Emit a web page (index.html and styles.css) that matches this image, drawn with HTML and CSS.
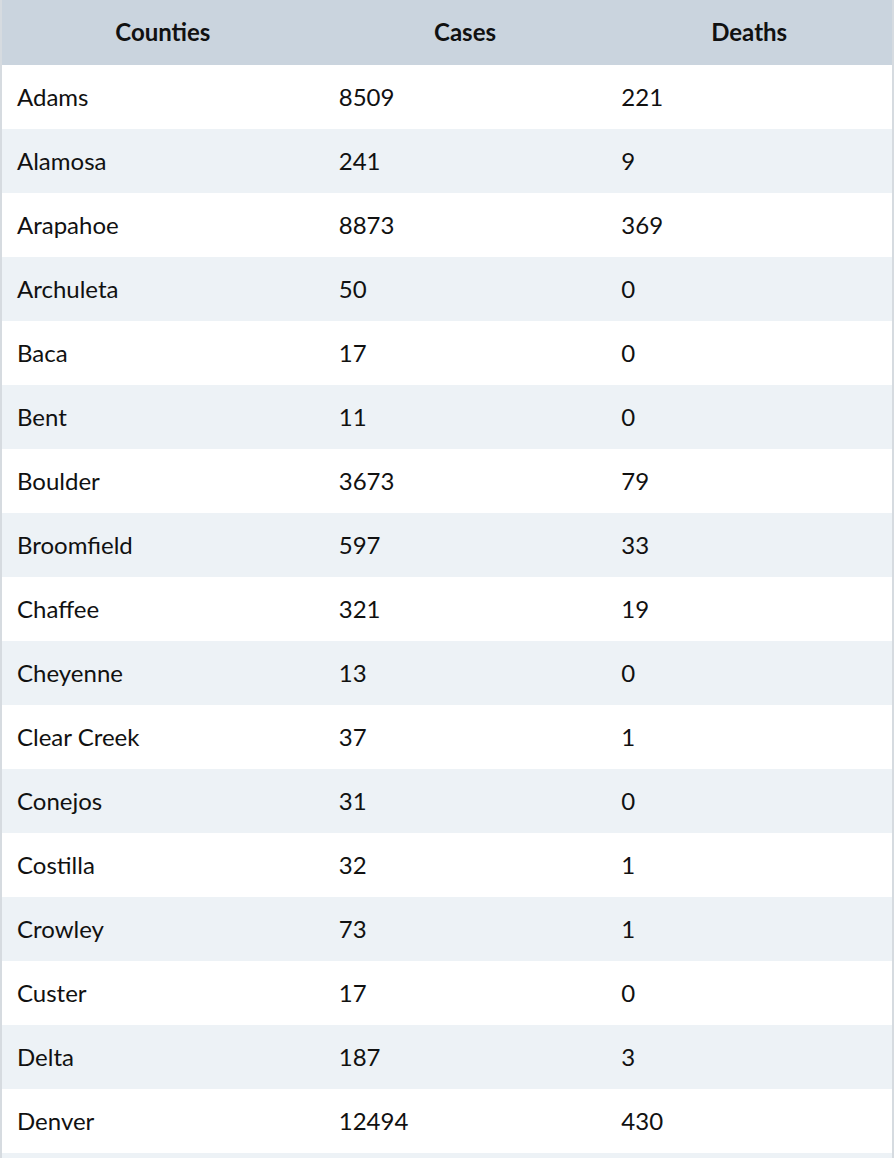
FILE: index.html
```html
<!DOCTYPE html>
<html>
<head>
<meta charset="utf-8">
<link rel="stylesheet" href="styles.css">
</head>
<body>
<table class="data">
  <colgroup><col class="c1"><col class="c2"><col class="c3"></colgroup>
  <thead>
    <tr><th>Counties</th><th>Cases</th><th>Deaths</th></tr>
  </thead>
  <tbody>
    <tr><td>Adams</td><td>8509</td><td>221</td></tr>
    <tr><td>Alamosa</td><td>241</td><td>9</td></tr>
    <tr><td>Arapahoe</td><td>8873</td><td>369</td></tr>
    <tr><td>Archuleta</td><td>50</td><td>0</td></tr>
    <tr><td>Baca</td><td>17</td><td>0</td></tr>
    <tr><td>Bent</td><td>11</td><td>0</td></tr>
    <tr><td>Boulder</td><td>3673</td><td>79</td></tr>
    <tr><td>Broomfield</td><td>597</td><td>33</td></tr>
    <tr><td>Chaffee</td><td>321</td><td>19</td></tr>
    <tr><td>Cheyenne</td><td>13</td><td>0</td></tr>
    <tr><td>Clear Creek</td><td>37</td><td>1</td></tr>
    <tr><td>Conejos</td><td>31</td><td>0</td></tr>
    <tr><td>Costilla</td><td>32</td><td>1</td></tr>
    <tr><td>Crowley</td><td>73</td><td>1</td></tr>
    <tr><td>Custer</td><td>17</td><td>0</td></tr>
    <tr><td>Delta</td><td>187</td><td>3</td></tr>
    <tr><td>Denver</td><td>12494</td><td>430</td></tr>
    <tr class="blank"><td></td><td></td><td></td></tr>
  </tbody>
</table>
</body>
</html>
```
FILE: styles.css
```css
html, body {
  margin: 0;
  padding: 0;
  background: #ffffff;
}
.data {
  width: 894px;
  border-collapse: collapse;
  table-layout: fixed;
  font-family: Lato, "Noto Sans", sans-serif;
  font-size: 24px;
  color: #111111;
  border-left: 2px solid #d6dbe0;
  border-right: 2px solid #d6dbe0;
}
.c1 { width: 322px; }
.c2 { width: 282px; }
.c3 { width: 286px; }
.data th {
  height: 63px;
  padding: 0 0 2px 0;
  background: #cad4de;
  font-weight: bold;
  text-align: center;
  vertical-align: middle;
}
.data td {
  height: 62px;
  padding: 0 0 2px 15px;
  vertical-align: middle;
  text-align: left;
}
.data tbody tr:nth-child(even) td {
  background: #edf2f6;
}
```
